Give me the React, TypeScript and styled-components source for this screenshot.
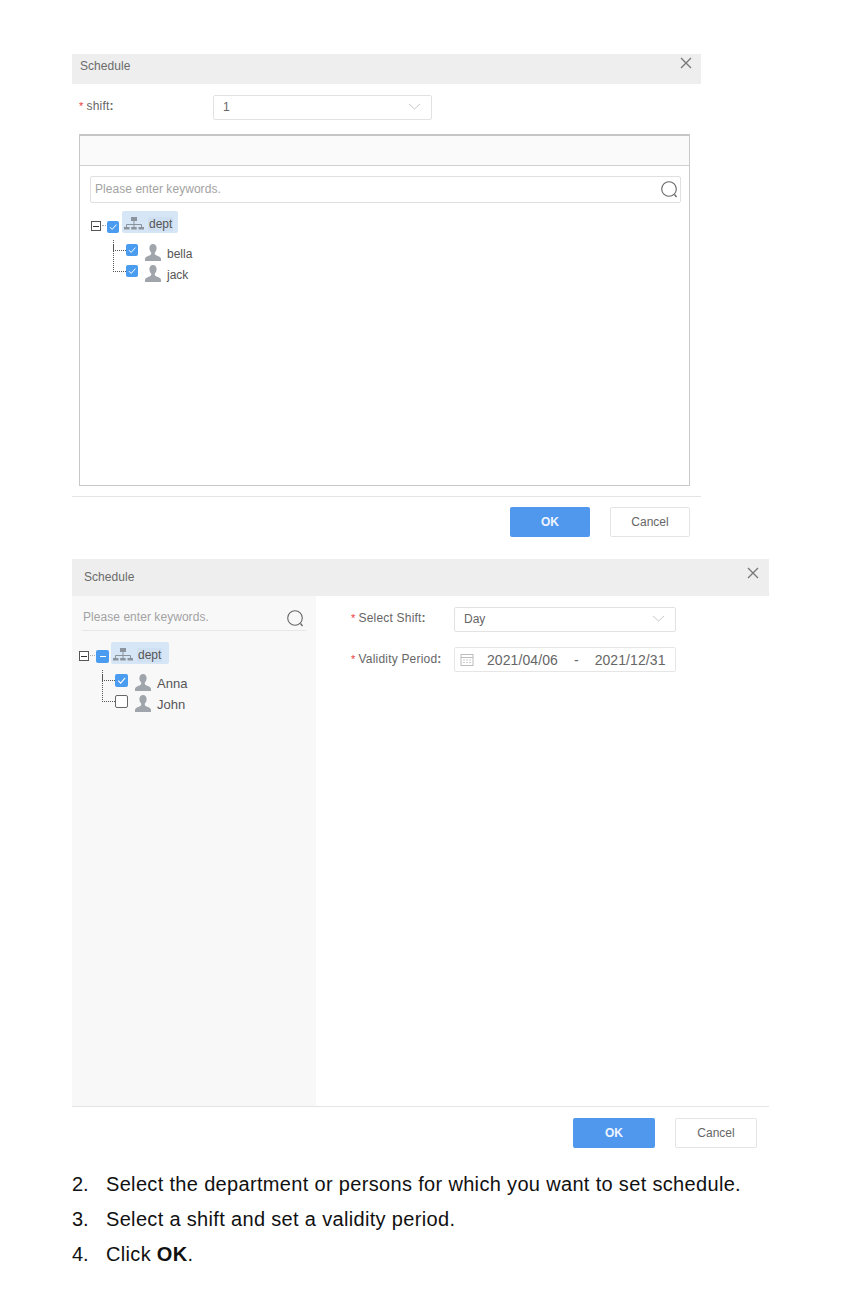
import React from 'react';
import styled, { createGlobalStyle } from 'styled-components';

const GlobalStyle = createGlobalStyle`
  html, body {
    margin: 0;
    padding: 0;
    background: #fff;
    font-family: "Liberation Sans", Arial, sans-serif;
  }
`;

const Page = styled.div`
  width: 847px;
  height: 1308px;
  overflow: hidden;
  padding: 54px 0 0 72px;
  box-sizing: border-box;
`;

const Dialog = styled.section<{ $width: number; $mt?: number }>`
  width: ${(p) => p.$width}px;
  margin-top: ${(p) => p.$mt ?? 0}px;
`;

const DialogHeader = styled.header<{ $height: number; $pl: number; $pr: number; $lh: number }>`
  height: ${(p) => p.$height}px;
  background: #eeeeee;
  display: flex;
  justify-content: space-between;
  align-items: flex-start;
  padding: 0 ${(p) => p.$pr}px 0 ${(p) => p.$pl}px;
  box-sizing: border-box;
  color: #6b6b6b;
  font-size: 12px;
  letter-spacing: 0.05px;
  line-height: ${(p) => p.$lh}px;
`;

const CloseIcon = styled.svg<{ $mt: number }>`
  margin-top: ${(p) => p.$mt}px;
  flex: none;
`;

const FormRow = styled.div`
  display: flex;
  align-items: center;
  height: 25px;
  margin: 11px 0 14px 7px;
`;

const Star = styled.span`
  color: #ee3b3b;
  font-size: 11px;
  margin-right: 3px;
`;

const FieldLabel = styled.label<{ $width: number; $pb: number }>`
  width: ${(p) => p.$width}px;
  flex: none;
  font-size: 12px;
  letter-spacing: 0.2px;
  padding-bottom: ${(p) => p.$pb}px;
  color: #666;
  white-space: nowrap;
  b {
    font-weight: 700;
  }
`;

const SelectBox = styled.div<{ $width: number }>`
  width: ${(p) => p.$width}px;
  height: 25px;
  box-sizing: border-box;
  border: 1px solid #e2e2e2;
  border-radius: 2px;
  background: #fff;
  display: flex;
  align-items: center;
  justify-content: space-between;
  padding: 0 10px 1px 9px;
  font-size: 12px;
  color: #666;
`;

const TreePanel = styled.div`
  width: 611px;
  height: 352px;
  margin-left: 7px;
  box-sizing: border-box;
  border: 1px solid #c9c9c9;
  border-top: 2px solid #c6c6c6;
`;

const PanelBand = styled.div`
  height: 29px;
  background: #fafafa;
  border-bottom: 1px solid #cfcfcf;
`;

const PanelBody = styled.div`
  padding: 10px 8px 0 10px;
`;

const SearchBox = styled.div`
  height: 27px;
  box-sizing: border-box;
  border: 1px solid #e0e0e0;
  border-radius: 2px;
  display: flex;
  align-items: center;
  justify-content: space-between;
  padding: 0 1px 0 4px;
  font-size: 12px;
  color: #a3a3a3;
  background: #fff;
`;

const Placeholder = styled.span`
  margin-bottom: 2px;
  letter-spacing: 0.05px;
`;

const SearchLine = styled.div`
  height: 35px;
  box-sizing: border-box;
  border-bottom: 1px solid #e6e7e8;
  margin: 0 10px 0 10px;
  display: flex;
  align-items: center;
  justify-content: space-between;
  padding: 10px 1px 0 1px;
  font-size: 12px;
  color: #a3a3a3;
`;

const Tree = styled.div<{ $mt: number; $ml: number }>`
  margin-top: ${(p) => p.$mt}px;
  margin-left: ${(p) => p.$ml}px;
`;

const RootRow = styled.div`
  display: flex;
  align-items: flex-end;
  height: 22px;
`;

const Toggle = styled.span<{ $mb: number }>`
  width: 10px;
  height: 10px;
  box-sizing: border-box;
  border: 1px solid #555;
  background: #fff;
  display: flex;
  align-items: center;
  justify-content: center;
  flex: none;
  margin-bottom: ${(p) => p.$mb}px;
  &::after {
    content: '';
    width: 6px;
    height: 1px;
    background: #333;
  }
`;

const ToggleDots = styled.span<{ $width: number; $mb: number }>`
  width: ${(p) => p.$width}px;
  margin: 0 1px ${(p) => p.$mb}px;
  border-top: 1px dotted #aaa;
  flex: none;
`;

const CheckBox = styled.span<{ $state: 'on' | 'off' | 'part'; $size: number; $mb?: number }>`
  width: ${(p) => p.$size}px;
  height: ${(p) => p.$size}px;
  margin-bottom: ${(p) => p.$mb ?? 0}px;
  box-sizing: border-box;
  border-radius: 2px;
  flex: none;
  display: flex;
  align-items: center;
  justify-content: center;
  background: ${(p) => (p.$state === 'off' ? '#fff' : '#4a9cf0')};
  border: ${(p) => (p.$state === 'off' ? '1px solid #666' : 'none')};
`;

const DashMark = styled.span`
  width: 6px;
  height: 1.5px;
  background: #fff;
`;

const NodeHighlight = styled.div<{ $width: number; $ml: number }>`
  width: ${(p) => p.$width}px;
  height: 22px;
  margin-left: ${(p) => p.$ml}px;
  background: #d6e6f6;
  border-radius: 2px;
  display: flex;
  align-items: center;
  padding: 4px 0 0 2px;
  box-sizing: border-box;
  font-size: 12px;
  color: #555;
`;

const NodeText = styled.span`
  margin-left: 4px;
  background: #cfe0f2;
  padding: 0 1px;
`;

const ChildList = styled.div<{ $mt: number; $ml: number }>`
  margin-top: ${(p) => p.$mt}px;
  margin-left: ${(p) => p.$ml}px;
  display: flex;
  flex-direction: column;
  gap: 4px;
`;

const ChildRow = styled.div`
  display: flex;
  align-items: flex-start;
  height: 17px;
`;

const Connector = styled.span<{ $height: number; $up: number }>`
  width: 13px;
  height: ${(p) => p.$height}px;
  margin-top: ${(p) => -p.$up}px;
  box-sizing: border-box;
  border-left: 1px dotted #555;
  border-bottom: 1px dotted #555;
  flex: none;
`;

const ChildLabel = styled.span<{ $size: number }>`
  font-size: ${(p) => p.$size}px;
  line-height: 20px;
  margin-left: 6px;
  color: #555;
`;

const PersonIcon = styled.svg`
  margin-left: 7px;
  flex: none;
`;

const DialogFooter = styled.footer<{ $mt: number; $height: number; $gap: number; $pr: number; $pt: number }>`
  margin-top: ${(p) => p.$mt}px;
  height: ${(p) => p.$height}px;
  border-top: 1px solid #e4e4e4;
  box-sizing: border-box;
  display: flex;
  justify-content: flex-end;
  align-items: flex-start;
  gap: ${(p) => p.$gap}px;
  padding: ${(p) => p.$pt}px ${(p) => p.$pr}px 0 0;
`;

const Button = styled.button<{ $primary?: boolean; $width: number }>`
  width: ${(p) => p.$width}px;
  height: 30px;
  box-sizing: border-box;
  border-radius: 2px;
  font-family: inherit;
  font-size: 12px;
  padding: 0;
  background: ${(p) => (p.$primary ? '#5098ee' : '#fff')};
  color: ${(p) => (p.$primary ? '#eef5ff' : '#666')};
  font-weight: ${(p) => (p.$primary ? 700 : 400)};
  border: ${(p) => (p.$primary ? 'none' : '1px solid #e4e4e4')};
`;

const SplitBody = styled.div`
  display: flex;
  height: 510px;
`;

const SidePane = styled.aside`
  width: 244px;
  flex: none;
  background: #f8f8f9;
`;

const FormPane = styled.div`
  flex: 1;
  padding: 11px 0 0 35px;
  display: flex;
  flex-direction: column;
  gap: 15px;
`;

const PaneRow = styled.div`
  display: flex;
  align-items: center;
`;

const DateBox = styled.div`
  width: 222px;
  height: 25px;
  box-sizing: border-box;
  border: 1px solid #e6e6e6;
  border-radius: 2px;
  display: flex;
  align-items: center;
  padding-left: 5px;
  font-size: 14px;
  letter-spacing: 0.08px;
  color: #666;
  white-space: nowrap;
`;

const DateText = styled.span`
  margin-left: 13px;
`;

const DateDash = styled.span`
  margin: 0 16px;
`;

const Steps = styled.ol`
  list-style: none;
  margin: 19px 0 0;
  padding: 0;
  color: #111;
  font-size: 20px;
  letter-spacing: 0.33px;
  line-height: 35px;
`;

const Step = styled.li`
  display: flex;
  b {
    font-weight: 700;
    white-space: pre;
  }
`;

const StepNumber = styled.span`
  width: 34px;
  flex: none;
  letter-spacing: 0;
`;

const Close = ({ mt }: { mt: number }) => (
  <CloseIcon $mt={mt} width={12} height={12} viewBox="0 0 12 12">
    <path d="M1 1l10 10M11 1L1 11" stroke="#777" strokeWidth="1.3" fill="none" />
  </CloseIcon>
);

const Chevron = () => (
  <svg width="13" height="8" viewBox="0 0 13 8">
    <path d="M1 1l5.500 5L12 1" stroke="#c8c8c8" strokeWidth="1" fill="none" />
  </svg>
);

const SearchIcon = () => (
  <svg width="19" height="19" viewBox="0 0 19 19">
    <circle cx="9" cy="9" r="7.300" stroke="#666" strokeWidth="1.100" fill="none" />
    <path d="M14.500 14.500l2 2.500" stroke="#666" strokeWidth="1.300" fill="none" />
  </svg>
);

const Tick = ({ size }: { size: number }) => (
  <svg width={size} height={size} viewBox="0 0 12 12">
    <path d="M3 6.200l2.200 2.200L9.400 3.600" stroke="#fff" strokeWidth="1" fill="none" />
  </svg>
);

const OrgIcon = () => (
  <svg width="20" height="14" viewBox="0 0 20 14" style={{ flex: 'none' }}>
    <rect x="7" y="0" width="6" height="4" fill="#8b939c" />
    <path d="M10 4v3M2.500 10V7.500h15V10M10 7v3" stroke="#8b939c" strokeWidth="1" fill="none" />
    <rect x="0" y="10" width="5.500" height="2.500" fill="#8b939c" />
    <rect x="7.200" y="10" width="5.500" height="2.500" fill="#8b939c" />
    <rect x="14.500" y="10" width="5.500" height="2.500" fill="#8b939c" />
  </svg>
);

const Person = () => (
  <PersonIcon width="16" height="17" viewBox="0 0 16 17">
    <path
      d="M8 0c2.300 0 3.600 1.700 3.600 4 0 1.900-.8 3.600-1.800 4.600v1.300c0 .9 1.300 1.300 3 2 1.700.7 3.200 1.400 3.200 3V17H0v-2.100c0-1.600 1.500-2.300 3.200-3 1.700-.7 3-1.100 3-2V8.600C5.200 7.600 4.400 5.900 4.400 4 4.400 1.700 5.700 0 8 0z"
      fill="#9fa5ab"
    />
  </PersonIcon>
);

const CalendarIcon = () => (
  <svg width="14" height="14" viewBox="0 0 14 14" style={{ flex: 'none' }}>
    <rect x="1" y="1.500" width="12" height="11" fill="none" stroke="#bcbcbc" />
    <path d="M1 4.500h12" stroke="#bcbcbc" strokeWidth="1" />
    <path d="M3 7h8M3 9.500h8" stroke="#cfcfcf" strokeWidth="1" strokeDasharray="2 1" />
  </svg>
);

const App: React.FC = () => (
  <>
    <GlobalStyle />
    <Page>
      <Dialog $width={629}>
        <DialogHeader $height={30} $pl={8} $pr={9} $lh={24}>
          Schedule
          <Close mt={3} />
        </DialogHeader>
        <FormRow>
          <FieldLabel $width={134} $pb={4}>
            <Star>*</Star>shift<b>:</b>
          </FieldLabel>
          <SelectBox $width={219}>
            1
            <Chevron />
          </SelectBox>
        </FormRow>
        <TreePanel>
          <PanelBand />
          <PanelBody>
            <SearchBox>
              <Placeholder>Please enter keywords.</Placeholder>
              <SearchIcon />
            </SearchBox>
            <Tree $mt={8} $ml={1}>
              <RootRow>
                <Toggle $mb={2} />
                <ToggleDots $width={4} $mb={7} />
                <CheckBox $state="on" $size={12}>
                  <Tick size={12} />
                </CheckBox>
                <NodeHighlight $width={56} $ml={3}>
                  <OrgIcon />
                  <NodeText>dept</NodeText>
                </NodeHighlight>
              </RootRow>
              <ChildList $mt={11} $ml={22}>
                <ChildRow>
                  <Connector $height={11} $up={4} />
                  <CheckBox $state="on" $size={12}>
                    <Tick size={12} />
                  </CheckBox>
                  <Person />
                  <ChildLabel $size={12}>bella</ChildLabel>
                </ChildRow>
                <ChildRow>
                  <Connector $height={27} $up={20} />
                  <CheckBox $state="on" $size={12}>
                    <Tick size={12} />
                  </CheckBox>
                  <Person />
                  <ChildLabel $size={12}>jack</ChildLabel>
                </ChildRow>
              </ChildList>
            </Tree>
          </PanelBody>
        </TreePanel>
        <DialogFooter $mt={10} $height={41} $gap={20} $pr={11} $pt={10}>
          <Button $primary $width={80}>OK</Button>
          <Button $width={80}>Cancel</Button>
        </DialogFooter>
      </Dialog>

      <Dialog $width={697} $mt={22}>
        <DialogHeader $height={37} $pl={12} $pr={10} $lh={37}>
          Schedule
          <Close mt={8} />
        </DialogHeader>
        <SplitBody>
          <SidePane>
            <SearchLine>
              <Placeholder>Please enter keywords.</Placeholder>
              <SearchIcon />
            </SearchLine>
            <Tree $mt={11} $ml={7}>
              <RootRow>
                <Toggle $mb={3} />
                <ToggleDots $width={5} $mb={8} />
                <CheckBox $state="part" $size={13} $mb={1}>
                  <DashMark />
                </CheckBox>
                <NodeHighlight $width={58} $ml={2}>
                  <OrgIcon />
                  <NodeText>dept</NodeText>
                </NodeHighlight>
              </RootRow>
              <ChildList $mt={10} $ml={23}>
                <ChildRow>
                  <Connector $height={11} $up={4} />
                  <CheckBox $state="on" $size={13}>
                    <Tick size={13} />
                  </CheckBox>
                  <Person />
                  <ChildLabel $size={13}>Anna</ChildLabel>
                </ChildRow>
                <ChildRow>
                  <Connector $height={27} $up={20} />
                  <CheckBox $state="off" $size={13} />
                  <Person />
                  <ChildLabel $size={13}>John</ChildLabel>
                </ChildRow>
              </ChildList>
            </Tree>
          </SidePane>
          <FormPane>
            <PaneRow>
              <FieldLabel $width={103} $pb={4}>
                <Star>*</Star>Select Shift<b>:</b>
              </FieldLabel>
              <SelectBox $width={222}>
                Day
                <Chevron />
              </SelectBox>
            </PaneRow>
            <PaneRow>
              <FieldLabel $width={103} $pb={2}>
                <Star>*</Star>Validity Period<b>:</b>
              </FieldLabel>
              <DateBox>
                <CalendarIcon />
                <DateText>2021/04/06</DateText>
                <DateDash>-</DateDash>
                <span>2021/12/31</span>
              </DateBox>
            </PaneRow>
          </FormPane>
        </SplitBody>
        <DialogFooter $mt={0} $height={42} $gap={20} $pr={12} $pt={11}>
          <Button $primary $width={82}>OK</Button>
          <Button $width={82}>Cancel</Button>
        </DialogFooter>
      </Dialog>

      <Steps>
        <Step>
          <StepNumber>2.</StepNumber>
          Select the department or persons for which you want to set schedule.
        </Step>
        <Step>
          <StepNumber>3.</StepNumber>
          Select a shift and set a validity period.
        </Step>
        <Step>
          <StepNumber>4.</StepNumber>
          Click <b> OK</b>.
        </Step>
      </Steps>
    </Page>
  </>
);

export default App;
